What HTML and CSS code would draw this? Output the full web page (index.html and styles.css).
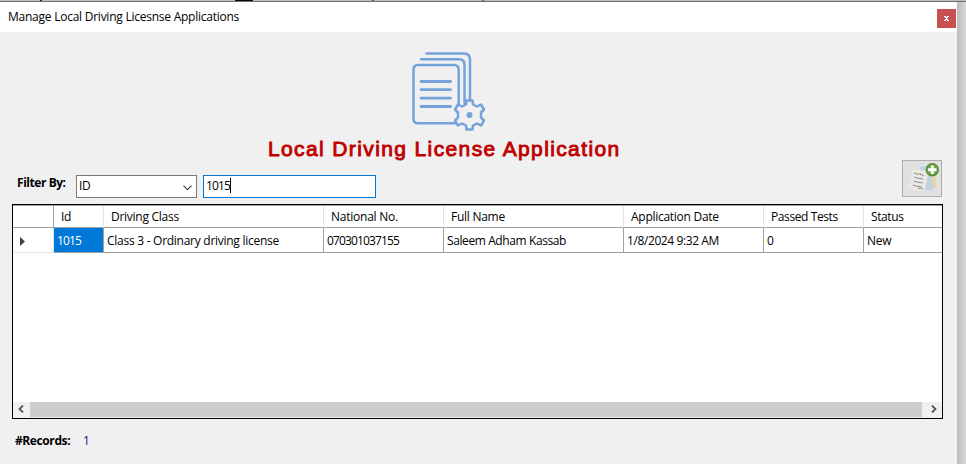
FILE: index.html
```html
<!DOCTYPE html>
<html lang="en">
<head>
<meta charset="utf-8">
<title>Manage Local Driving Licesnse Applications</title>
<link rel="stylesheet" href="styles.css">
</head>
<body>
<div class="backdrop-top"><i class="b1"></i><i class="b2"></i><i class="b3"></i><i class="b4"></i></div>
<div class="desktop">
<main class="window">
  <header class="titlebar"><span class="caption">Manage Local Driving Licesnse Applications</span><button class="close" aria-label="Close"><svg width="5" height="5" viewBox="0 0 5 5" shape-rendering="crispEdges"><path d="M0 0h2v1h1v-1h2v1h-1v1h-1v1h1v1h1v1h-2v-1h-1v1h-2v-1h1v-1h1v-1h-1v-1h-1z" fill="#fff"/></svg></button></header>
  <div class="hero">
    <svg width="74" height="80" viewBox="0 0 74 80" fill="none" stroke="#74a2da" stroke-width="2.5" stroke-linecap="round" stroke-linejoin="round">
      <path d="M15.500 2.500H53Q59 2.500 59 8.500V48M10 8.300H48Q53.500 8.300 53.500 14V52M46 72.300H7Q2.500 72.300 2.500 68V19Q2.500 14 7 14H43Q47.700 14 47.700 19V53"/>
      <path d="M10 30.500H39.500M10 38.700H39.500M10 47.200H39.500M10 55.500H39.500" stroke-width="2.800"/>
      <path d="M55.500 49.500H61.500L62 53.500L66 55.500L70 53.500L73 58.500L70 61.500V66.500L73 69.500L70 74.500L66 72.500L62 74.500L61.500 78.500H55.500L55 74.500L51 72.500L47 74.500L44 69.500L47 66.500V61.500L44 58.500L47 53.500L51 55.500L55 53.500Z" fill="#f0f0f0"/>
      <circle cx="58.500" cy="64" r="3" fill="#74a2da" stroke="none"/>
    </svg>
    <h1>Local Driving License Application</h1>
  </div>
  <section class="filters">
    <label class="filter-label">Filter By:</label>
    <div class="combo"><span>ID</span><svg width="9" height="6" viewBox="0 0 9 6"><path d="M.5.700L4.500 4.700L8.500.700" fill="none" stroke="#444" stroke-width="1.200"/></svg></div>
    <div class="textbox"><span class="digits">1015</span><i class="caret"></i></div>
    <button class="add" aria-label="Add application"><svg width="38" height="35" viewBox="0 0 38 35">
      <path d="M21 5L31 9L34 26L24 28Z" fill="#e3d3a8"/><path d="M17 6L26 5L30 29H20Z" fill="#bdd2e3"/>
      <path d="M9 7Q17 9 25 10Q25 19 21 31Q12 31 4 27Q9 19 9 7Z" fill="#e9e8e5" stroke="#d8d8d5" stroke-width=".5"/>
      <path d="M11 12l3 1 4 0M11 16l3 1 6 1M11 20l3 1 6 1M10 24l3 1 6 1M17 13l4 2M15 27l5 1" fill="none" stroke="#858585" stroke-width=".9"/>
      <circle cx="29.300" cy="8.700" r="6.700" fill="#558d32"/><circle cx="29.300" cy="8.700" r="5.500" fill="#6da43e"/><path d="M29.300 4.500v8.400M25.100 8.700h8.400" stroke="#fff" stroke-width="3"/>
    </svg></button>
  </section>
  <section class="grid">
    <div class="row head"><div></div><div><span>Id</span></div><div><span>Driving Class</span></div><div><span class="wide">National No.</span></div><div><span>Full Name</span></div><div><span>Application Date</span></div><div><span class="tight">Passed Tests</span></div><div><span class="tight">Status</span></div></div>
    <div class="row data"><div><svg width="5" height="9" viewBox="0 0 5 9"><path d="M0 0L5 4.500L0 9Z" fill="#404040"/></svg></div><div class="selected"><span class="digits">1015</span></div><div><span>Class 3 - Ordinary driving license</span></div><div><span class="digits">070301037155</span></div><div><span class="tight">Saleem Adham Kassab</span></div><div><span class="tight">1/8/2024 9:32 AM</span></div><div><span>0</span></div><div><span>New</span></div></div>
    <div class="scroll"><svg width="6" height="8" viewBox="0 0 6 8"><path d="M5 .500L1.500 4L5 7.500" fill="none" stroke="#555" stroke-width="1.800"/></svg><div class="thumb"></div><svg width="6" height="8" viewBox="0 0 6 8"><path d="M1 .500L4.500 4L1 7.500" fill="none" stroke="#555" stroke-width="1.800"/></svg></div>
  </section>
  <footer><b>#Records:</b><span>1</span></footer>
</main>
<aside class="edge"></aside>
</div>
</body>
</html>
```
FILE: styles.css
```css
* { box-sizing: border-box; }
body { margin: 0; width: 966px; height: 464px; overflow: hidden; background: #f0f0f0; color: #000; font: 12px/16px "Open Sans", sans-serif; letter-spacing: -.27px; }
button { padding: 0; font: inherit; }
.backdrop-top { height: 2px; background: #bdbdbd; border-bottom: 1px solid #707070; display: flex; }
.backdrop-top i { height: 1px; }
.b1 { width: 2px; margin-left: 40px; background: #222; }
.b2 { width: 18px; margin-left: 193px; background: #080808; }
.b3 { width: 2px; margin-left: 119px; background: #555; }
.b4 { width: 2px; margin-left: 108px; background: #666; }
.desktop { display: flex; height: 462px; }
.window { width: 957px; background: #f0f0f0; }
.titlebar { height: 30px; background: #fff; display: flex; justify-content: space-between; padding: 7px 1px 0 8px; }
.caption { letter-spacing: -.245px; }
.close { width: 19px; height: 19px; border: 0; background: #c75050; display: flex; align-items: center; justify-content: center; }
.edge { width: 9px; background: linear-gradient(90deg, #bcbcbc, #d8d8d8); }
.hero { height: 128px; padding: 19px 65px 0 0; display: flex; flex-direction: column; align-items: center; }
.hero > svg { flex: none; margin-left: 3px; }
h1 { margin: 6px 0 0; width: 356px; white-space: nowrap; color: #c00000; font: 400 21px/24px "Liberation Sans", sans-serif; letter-spacing: 1.38px; -webkit-text-stroke: .9px #c00000; }
.filters { height: 44px; display: flex; padding-left: 17px; }
.filter-label { width: 59px; margin-top: 15px; font-weight: 700; white-space: nowrap; letter-spacing: -.45px; }
.combo, .textbox { height: 23px; margin-top: 15px; background: #fff; border: 1px solid #7a7a7a; display: flex; padding: 2px; }
.combo { width: 121px; padding-right: 4px; justify-content: space-between; }
.combo svg { margin-top: 7px; }
.textbox { width: 173px; margin-left: 6px; border-color: #0078d7; padding-left: 2px; }
.caret { width: 1px; height: 15px; background: #000; }
.add { width: 40px; height: 37px; margin-left: 526px; border: 1px solid #adadad; background: #e1e1e1; }
.add svg { display: block; }
.grid { margin-left: 12px; width: 931px; height: 215px; border: 1px solid #000; background: #fff; display: flex; flex-direction: column; }
.row { display: grid; grid-template-columns: 41px 50px 220px 120px 180px 140px 100px 78px; }
.row > div { border-right: 1px solid #a0a0a0; border-bottom: 1px solid #a0a0a0; padding-left: 3px; white-space: nowrap; }
.row > div:last-child { border-right: 0; }
.head { height: 23px; border-top: 1px solid #a0a0a0; }
.head > div { padding: 3px 0 0 7px; border-right-color: #e5e5e5; }
.head > div:first-child { border-right-color: #a0a0a0; }
.data { height: 25px; }
.data > div { padding-top: 5px; }
.data > div:first-child { padding: 9px 0 0 7px; border-color: #e5e5e5; }
.data svg { display: block; }
.row .selected { background: #0078d7; color: #fff; }
.digits { letter-spacing: -.85px; }
.wide { letter-spacing: -.24px; }
.tight { letter-spacing: -.4px; }
.scroll { height: 16px; margin-top: auto; background: #f0f0f0; display: flex; align-items: flex-start; justify-content: space-between; padding: 0 5px; }
.scroll svg { margin-top: 3px; }
.thumb { width: 892px; height: 15px; margin-right: 3px; background: #cdcdcd; }
footer { display: flex; padding: 14px 0 0 15px; }
footer b { width: 68px; font-weight: 700; letter-spacing: -.4px; }
footer span { color: #400080; }
```
